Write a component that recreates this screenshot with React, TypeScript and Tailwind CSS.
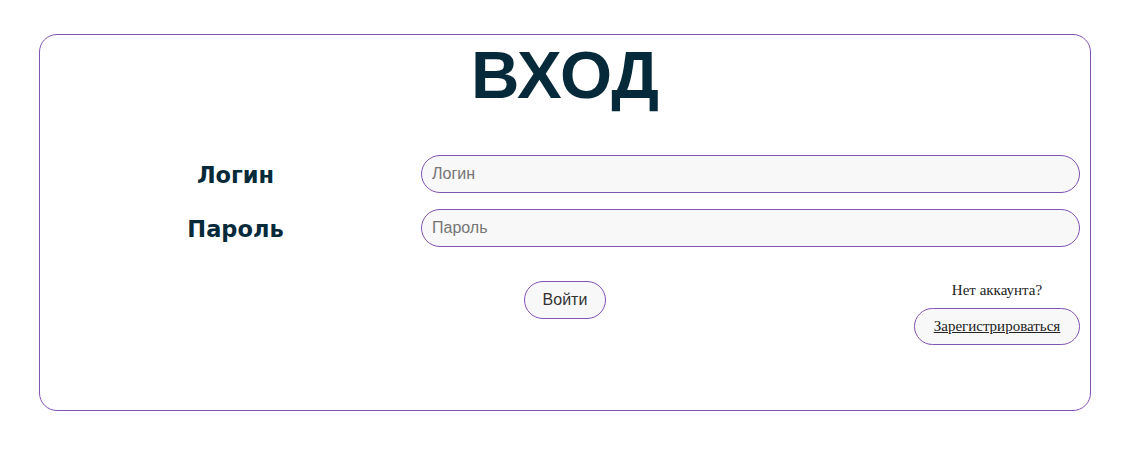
const fields = [
  { label: "Логин", placeholder: "Логин", type: "text" },
  { label: "Пароль", placeholder: "Пароль", type: "password" },
];

export default function App() {
  return (
    <div className="min-h-screen bg-white pt-[34px] px-[39px]">
      <form
        className="w-[1052px] h-[377px] rounded-[18px] border border-[#8352b3] px-[10px]"
        onSubmit={(e) => e.preventDefault()}
      >
        <h1 className="text-center text-[67px] leading-[74px] font-bold text-[#062a3a] font-['Liberation_Sans',Arial,sans-serif] mt-[3px]">
          ВХОД
        </h1>
        <div className="mt-[43px] flex flex-col gap-[16px]">
          {fields.map((f) => (
            <div key={f.label} className="grid grid-cols-[371px_1fr] items-center">
              <label className="pt-[3px] text-center text-[22.5px] font-bold text-[#062a3a] font-['DejaVu_Sans',Verdana,sans-serif]">
                {f.label}
              </label>
              <input
                type={f.type}
                placeholder={f.placeholder}
                className="h-[38px] rounded-full border border-[#8352b3] bg-[#f8f8f8] px-[10px] text-[16px] font-['Liberation_Sans',Arial,sans-serif] placeholder:text-[#757575] outline-none"
              />
            </div>
          ))}
        </div>
        <div className="mt-[34px] grid grid-cols-3 items-start">
          <div />
          <div className="flex justify-center">
            <button
              type="submit"
              className="h-[38px] px-[18px] rounded-full border border-[#8352b3] bg-[#f8f8f8] text-[16px] text-[#333] font-['Liberation_Sans',Arial,sans-serif]"
            >
              Войти
            </button>
          </div>
          <div className="flex justify-end">
            <div className="flex flex-col items-center gap-[9px] font-['Liberation_Serif','Times_New_Roman',serif] text-[15px] text-[#222]">
              <p className="leading-[18px]">Нет аккаунта?</p>
              <button
                type="button"
                className="h-[37px] w-[166px] rounded-full border border-[#8352b3] bg-[#f8f8f8] underline"
              >
                Зарегистрироваться
              </button>
            </div>
          </div>
        </div>
      </form>
    </div>
  );
}
